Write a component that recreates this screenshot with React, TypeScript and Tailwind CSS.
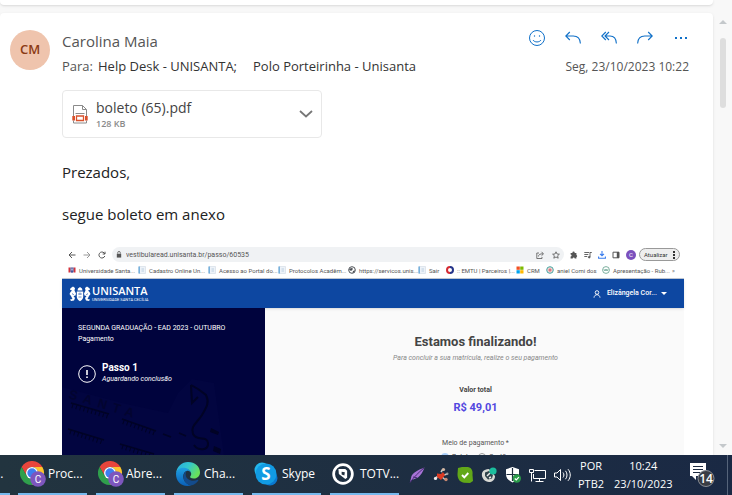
import type { ReactNode } from 'react';

type IconProps = { className?: string };

const stroke = { fill: 'none', stroke: 'currentColor', strokeWidth: 1.3 } as const;

/* ---------- mail icons ---------- */

function Smile() {
  return (
    <svg viewBox="0 0 16 16" className="size-4" {...stroke} strokeWidth={1}>
      <circle cx="8" cy="8" r="7.5" />
      <path d="M4 10c1.6 2.6 6.4 2.6 8 0" />
      <circle cx="5.5" cy="6" r=".7" fill="currentColor" stroke="none" />
      <circle cx="10.5" cy="6" r=".7" fill="currentColor" stroke="none" />
    </svg>
  );
}

function Reply() {
  return (
    <svg viewBox="0 0 16 16" className="size-4" {...stroke} strokeWidth={1.1}>
      <path d="M4.8 2 .8 6l4 4M.8 6h7.4c4.400 0 7 2.600 7.200 7.500" />
    </svg>
  );
}

function ReplyAll() {
  return (
    <svg viewBox="0 0 16 16" className="size-4" {...stroke} strokeWidth={1.1}>
      <path d="M4.800 2 .8 6l4 4M8 2 4 6l4 4M4 6h5c4 0 6.200 2.600 6.400 7.500" />
    </svg>
  );
}

function Forward() {
  return (
    <svg viewBox="0 0 16 16" className="size-4" {...stroke} strokeWidth={1.1}>
      <path d="m11.200 2 4 4-4 4M15.200 6H7.800C3.400 6 .8 8.600.6 13.500" />
    </svg>
  );
}

function Dots() {
  return (
    <svg viewBox="0 0 16 16" className="size-4" fill="currentColor">
      <path d="M2 7h2v2H2zM7 7h2v2H7zM12 7h2v2h-2z" />
    </svg>
  );
}

function PdfFile() {
  return (
    <svg viewBox="0 0 16 19" className="h-[19px] w-4 shrink-0" fill="none">
      <path d="M1.500 11V.5h9l4 4V11M1.500 15.500v2.500h13v-2.500M10.500.5v4h4M3.500 8.500h9" stroke="#8a8a8a" />
      <path d="M4.500 11h7v4.500h-7z" stroke="#d9512c" strokeWidth="1.300" />
      <path d="M.3 11h2.700v4.500H.3zM13 11h2.700v4.500H13z" fill="#d9512c" />
    </svg>
  );
}

function Chevron() {
  return (
    <svg viewBox="0 0 14 8" className="h-2 w-3.5" fill="none" stroke="#777" strokeWidth="1.800">
      <path d="m1 1 6 5.500L13 1" />
    </svg>
  );
}

/* ---------- embedded browser icons ---------- */

function ArrowGlyph({ className }: IconProps) {
  return (
    <svg viewBox="0 0 8 8" className={`size-2 ${className ?? ''}`} {...stroke} strokeWidth={1}>
      <path d="M4 1 1 4l3 3M1 4h6.500" />
    </svg>
  );
}

function Reload() {
  return (
    <svg viewBox="0 0 8 8" className="size-2" {...stroke} strokeWidth={1}>
      <path d="M6.800 5A3 3 0 1 1 6 1.800L7 3M7 .7V3H4.700" />
    </svg>
  );
}

function Lock() {
  return (
    <svg viewBox="0 0 6 8" className="h-[7px] w-1.5 text-[#555]" {...stroke} strokeWidth={0.900}>
      <path d="M1.500 3V2a1.500 1.500 0 0 1 3 0v1" />
      <path d="M.5 3.200h5V7.500h-5z" fill="currentColor" stroke="none" />
    </svg>
  );
}

function Share() {
  return (
    <svg viewBox="0 0 8 8" className="size-2" {...stroke} strokeWidth={0.800}>
      <path d="M3 2H.8v5.500H6V6M2.500 5.500C2.500 3.500 4 2.800 7 2.800M5.500.8l2 2-2 2" />
    </svg>
  );
}

function Star() {
  return (
    <svg viewBox="0 0 8 8" className="size-2" {...stroke} strokeWidth={0.800}>
      <path d="m4 .8 1 2.200 2.400.2-1.800 1.600.6 2.400L4 6 1.800 7.200l.6-2.400L.6 3.200 3 3z" />
    </svg>
  );
}

function Puzzle() {
  return (
    <svg viewBox="0 0 8 8" className="size-2" fill="currentColor">
      <path d="M.6 2H2.500a1.100 1.100 0 1 1 2.100 0h1.800v1.900a1.100 1.100 0 0 1 0 2.100v1.500H4.700a1 1 0 0 0-2 0H.6V5.500a1 1 0 0 0 0-2z" />
    </svg>
  );
}

function Playlist() {
  return (
    <svg viewBox="0 0 8 8" className="size-2" {...stroke} strokeWidth={0.900}>
      <path d="M.3 1.500h5M.3 3.500h4M.3 5.500h3M6 6V1.500h1.800" />
      <circle cx="5.200" cy="6.200" r=".8" fill="currentColor" />
    </svg>
  );
}

function Download() {
  return (
    <svg viewBox="0 0 8 8" className="size-2 text-[#3b7ded]" {...stroke} strokeWidth={1.100}>
      <path d="M4 0v4.500M2 2.800 4 4.800l2-2M.6 5.500v1.700h6.800V5.500" />
    </svg>
  );
}

function Panel() {
  return (
    <svg viewBox="0 0 8 8" className="size-2" {...stroke} strokeWidth={1}>
      <path d="M1 1.200h6v5.600H1z" />
      <path d="M4.800 1H7v6H4.800z" fill="currentColor" stroke="none" />
    </svg>
  );
}

function PageMark() {
  return (
    <svg viewBox="0 0 8 8" className="size-2 shrink-0">
      <path d="M1 .5h6.500v7H1z" fill="#edf2f8" stroke="#c8d3df" strokeWidth=".5" />
      <path d="M.5.5h1.300v7H.5z" fill="#5ba2d8" />
      <path d="M3.500 3h2.500M3.500 5h2.500" stroke="#9eb9d2" strokeWidth=".6" />
    </svg>
  );
}

function CrestMark() {
  return (
    <svg viewBox="0 0 8 8" className="size-2 shrink-0">
      <path d="M.5 1.500h2v5h-2zM5.500 1.500h2v5h-2z" fill="#d4323c" />
      <path d="M2.500 1.500h3v4.500L4 7 2.500 6z" fill="#46549c" />
      <path d="M3.500 2.500h1v2h-1z" fill="#fff" />
    </svg>
  );
}

function GlobeMark() {
  return (
    <svg viewBox="0 0 8 8" className="size-2 shrink-0">
      <circle cx="4" cy="4" r="3.300" fill="#fff" stroke="#4b4f55" />
      <path d="M1 3.500 3 2l2 .5L4 4.500l-1.500.3zM5 5l2-.7L6 6.500l-1.500.3z" fill="#4b4f55" />
    </svg>
  );
}

function EmtuMark() {
  return (
    <svg viewBox="0 0 8 8" className="size-2 shrink-0" fill="none" strokeWidth="2">
      <path d="M4 1a3 3 0 0 0 0 6" stroke="#d42a32" />
      <path d="M4 1a3 3 0 0 1 0 6" stroke="#25348a" />
    </svg>
  );
}

function WindowsMark() {
  return (
    <svg viewBox="0 0 8 8" className="size-2 shrink-0">
      <path d="M.5.5h3.300v3.300H.5z" fill="#f25022" />
      <path d="M4.200.5h3.300v3.300H4.200z" fill="#7fba00" />
      <path d="M.5 4.200h3.300v3.300H.5z" fill="#00a4ef" />
      <path d="M4.200 4.200h3.300v3.300H4.200z" fill="#ffb900" />
    </svg>
  );
}

function TargetMark() {
  return (
    <svg viewBox="0 0 8 8" className="size-2 shrink-0">
      <circle cx="4" cy="4" r="3.300" fill="#f3d2d2" stroke="#45aaa6" />
      <circle cx="4" cy="4" r="1.500" fill="#dc7880" />
    </svg>
  );
}

function WaveMark() {
  return (
    <svg viewBox="0 0 8 8" className="size-2 shrink-0" fill="none" stroke="#5c9c86" strokeWidth=".8">
      <circle cx="4" cy="4" r="3.400" />
      <path d="M2 3.200 3 5l1-2 1 2 1-1.800" />
    </svg>
  );
}

function UnisantaCrest() {
  return (
    <svg viewBox="0 0 22 16" className="h-4 w-[22px] shrink-0" fill="#fff">
      <path d="M4 .5 6 2 5.500 4.500l1.500 3-.5 2-2 .5 1.500 2L5 14.500l-3 .5-1-1.500 2.500-.5-1.500-3L.5 8l1-2L3 4.500l-2-.7.5-1.600z" />
      <path d="M18 .5 16 2l.5 2.500-1.500 3 .5 2 2 .5-1.500 2 1 2.500 3 .5 1-1.500-2.500-.5 1.500-3 1.500-2-1-2L19 4.500l2-.7-.5-1.600z" />
      <path d="M8.500 4.500 9 2.500l2-1.500 2 1.500.5 2zM7.800 5.500h6.400V11c0 2-1.700 3.200-3.200 4.200C9.500 14.200 7.800 13 7.800 11z" />
      <path d="M9 8h4M11 6.500V9M9.500 11h3" stroke="#4c77bb" strokeWidth=".8" />
      <path d="M3.500 7.500 4.500 9M18.500 7.500l-1 1.500" stroke="#0d47a1" strokeWidth=".8" />
    </svg>
  );
}

function Building() {
  return (
    <svg viewBox="0 0 203 76" preserveAspectRatio="xMinYMin slice" className="absolute top-[71px] left-0 h-[76px] w-full" aria-hidden="true">
      <path d="M0 8 60 24l46 10 10-20 14-14 22 4 10 72H0z" fill="#020540" />
      <text transform="translate(6 19) rotate(17)" letterSpacing="6" fill="#020430" fontFamily="Liberation Sans" fontWeight="bold" fontSize="13">SANTA</text>
      <g fill="none" stroke="#010325" strokeWidth="1.500">
        <path d="m9 24 38 11M60 40l34 12M6 50l36 11M58 65l34 10M101 55l8 3M117 54l7 3" />
        <path d="m10 27 37 11M61 43l33 12M8 53l34 11M60 68l32 10" strokeWidth="4" strokeDasharray="1 3" />
        <path d="M129 6l7 4 8 6c4 8 0 13-4 20-5 8-12 11-9 19 4 8 14 1 15 9 1 8-10 8-14 2M129 6l1 18 6-6" strokeWidth="2" />
      </g>
      <path d="m149 49 8 4-1 3-8-3zM152 67l7 3-1 5-7-3z" fill="#010325" />
    </svg>
  );
}

/* ---------- taskbar icons ---------- */

function Chrome() {
  return (
    <svg viewBox="0 0 26 26" className="size-[26px] shrink-0">
      <path d="M1.600 6A12 12 0 0 1 22.400 6H12A6 6 0 0 0 6.800 15z" fill="#e8453c" />
      <path d="M22.400 6A12 12 0 0 1 12 24l5.200-9A6 6 0 0 0 12 6z" fill="#fdc52c" />
      <path d="M12 24A12 12 0 0 1 1.600 6l5.200 9a6 6 0 0 0 10.400 0z" fill="#2f9f4c" />
      <circle cx="12" cy="12" r="6" fill="#fff" />
      <circle cx="12" cy="12" r="4.700" fill="#3c7ff0" />
      <circle cx="18" cy="18" r="7.800" fill="#7d56bd" />
      <text x="18" y="21.500" textAnchor="middle" fontSize="10" fontFamily="Roboto" fill="#fff">C</text>
    </svg>
  );
}

function Edge() {
  return (
    <svg viewBox="0 0 24 24" className="mr-0.5 size-6 shrink-0">
      <defs>
        <linearGradient id="edgeTop" x1="0" y1="0" x2="1" y2=".5">
          <stop offset="0" stopColor="#2aa9dd" />
          <stop offset=".5" stopColor="#32c6cf" />
          <stop offset="1" stopColor="#69e05a" />
        </linearGradient>
        <linearGradient id="edgeBody" x1="0" y1="0" x2="0" y2="1">
          <stop offset="0" stopColor="#1fa0e2" />
          <stop offset="1" stopColor="#0a5fb8" />
        </linearGradient>
      </defs>
      <path d="M.2 10.500C1 4.200 5.900 0 12 0c7 0 12 4.800 12 10.200 0 4-3 6.300-6.300 6.300-3 0-4-1.200-3.500-2 .8-1.200 1-1.800 1-2.700 0-2.500-3-5.300-7.200-5.300-3.300 0-6 1.500-7.800 4z" fill="url(#edgeTop)" />
      <path d="M0 12c0-3.500 3.200-6.200 7.500-6.200 3.500 0 7 2.200 7.600 5-1-1.500-2.500-2-4-2C8 9.500 6.500 13 7.500 16.500 8.500 20.500 12 23 15.500 23.300 6.500 26 0 20 0 12z" fill="url(#edgeBody)" />
      <path d="M11 9c-2.500 1-3.900 4-3.400 7.500.8 4 4.400 7 8.400 6.700 3-.8 5-2.700 6.300-4.700.4-.8-.2-1-.7-.7C15.500 20.500 10 17 9.700 13c-.1-1.700.4-3 1.300-4z" fill="#134b8c" />
    </svg>
  );
}

function Skype() {
  return (
    <svg viewBox="0 0 24 24" className="mr-0.5 size-6 shrink-0">
      <circle cx="8" cy="8" r="7.500" fill="#23b7ee" />
      <circle cx="16" cy="16" r="7.500" fill="#0a78cf" />
      <circle cx="12" cy="12" r="10.500" fill="#119be3" />
      <text x="12" y="18" textAnchor="middle" fontSize="17" fontWeight="bold" fontFamily="Open Sans" fill="#fff">S</text>
    </svg>
  );
}

function Totvs() {
  return (
    <svg viewBox="0 0 24 24" className="mr-1 size-[22px] shrink-0">
      <circle cx="12" cy="12" r="10.200" fill="none" stroke="#fff" strokeWidth="3" />
      <path d="M7 6.500h7.500l2 2V16l-2 1.500-7-5.500z" fill="#fff" />
      <path d="m10.500 9.500 3.500.5-.5 3.500-3-1z" fill="#22303f" />
    </svg>
  );
}

function Feather() {
  return (
    <svg viewBox="0 0 16 16" className="size-4">
      <path d="M1 15.500 2.500 9C5 5 9 3 15.500.5 14 5 12 8 9 10.500L3 13z" fill="#a773d6" />
      <path d="M1 15.500C5 10 9 6 15 1M4 10l4 .8" stroke="#4b2c78" strokeWidth="1" fill="none" />
    </svg>
  );
}

function Tools() {
  return (
    <svg viewBox="0 0 16 16" className="size-4">
      <path d="m1.500 11.500 4-2.500M8 5l2-3M10.500 8l4-1M9 10l3 2.500" stroke="#c9ccca" strokeWidth="1.600" />
      <path d="m4 6.500 4 .5 2-2 2 3-4 5-4-3z" fill="#dc3a22" />
      <circle cx="10.500" cy="2.500" r="1.600" fill="#d5b8a4" />
      <circle cx="13" cy="12.500" r="1.700" fill="#c98871" />
      <circle cx="2.500" cy="11.500" r="1.600" fill="#eee" />
      <circle cx="14.300" cy="6.800" r="1.200" fill="#999" />
    </svg>
  );
}

function GreenCheck() {
  return (
    <svg viewBox="0 0 16 16" className="size-4">
      <path d="M1 1 5 0h6c4 1 5 4 4.500 8L16 14l-3 2-6-.3C2 15 .5 11 .5 7z" fill="#62a818" />
      <path d="m5 8 2.300 2.300L11.300 6" stroke="#fff" strokeWidth="1.900" fill="none" />
    </svg>
  );
}

function Headset() {
  return (
    <svg viewBox="0 0 16 16" className="size-4">
      <path d="M1 6c1-3 4-4 7-4l6 7c0 4-3 6-6 6-4 0-8-4-7-9z" fill="#d8d9d5" />
      <path d="M4 5.500 8 4l4 4-1 3.500-4 1L4 9z" fill="#30434b" />
      <path d="m6 9 3-3M8 11l2-1" stroke="#e9e9e9" strokeWidth="1.500" fill="none" />
      <circle cx="12" cy="4" r="3.600" fill="#1bbd9d" />
    </svg>
  );
}

function Shield() {
  return (
    <svg viewBox="0 0 16 16" className="size-4">
      <path d="M7.500 0 14 2.300V7.500c0 4-3 6-6.500 8C4 13.500 1 11.500 1 7.500V2.300z" fill="#fff" />
      <path d="M7.500 1v13M1.500 7.500h12" stroke="#1d2c3e" strokeWidth="1.200" />
      <circle cx="11.800" cy="11.500" r="4.200" fill="#2b9b4a" />
      <path d="m9.800 11.500 1.500 1.500 2.600-2.800" stroke="#fff" strokeWidth="1.200" fill="none" />
    </svg>
  );
}

function Network() {
  return (
    <svg viewBox="0 0 17 15" className="h-[15px] w-[17px]" fill="none" stroke="#fff">
      <path d="M5.500 2.500h11v8H4.500V6M10.500 10.500v3M6.500 13.500h8M.5 1.500h4v3h-4zM2.500 4.500v9" />
    </svg>
  );
}

function Speaker() {
  return (
    <svg viewBox="0 0 18 14" className="h-3.5 w-[18px]" fill="none" stroke="#fff">
      <path d="M.5 5v4h2.500l3.500 3.500v-11L3 5zM9 4.500c1.200 1.500 1.200 3.500 0 5M11.500 2.800c2 2.500 2 6 0 8.400M14 1.200c3 3.500 3 8.100 0 11.600" />
    </svg>
  );
}

function Notification() {
  return (
    <svg viewBox="0 0 25 24" className="h-6 w-[25px]">
      <path d="M0 0h16v13H6v4l-4-4H0z" fill="#fff" />
      <path d="M3 3.500h10M3 6.500h10M3 9.500h7" stroke="#1c2b42" />
      <circle cx="16" cy="15.500" r="8" fill="#3a3d44" stroke="#8b8f96" />
      <text x="16" y="20" textAnchor="middle" fontSize="12" fontWeight="600" fontFamily="Open Sans" fill="#fff">14</text>
    </svg>
  );
}

/* ---------- data ---------- */

const mailActions: { label: string; icon: ReactNode }[] = [
  { label: 'Reagir', icon: <Smile /> },
  { label: 'Responder', icon: <Reply /> },
  { label: 'Responder a todos', icon: <ReplyAll /> },
  { label: 'Encaminhar', icon: <Forward /> },
  { label: 'Mais ações', icon: <Dots /> },
];

const bookmarks: { label: string; icon: ReactNode; width: string }[] = [
  { label: 'Universidade Santa...', icon: <CrestMark />, width: 'w-13' },
  { label: 'Cadastro Online Un...', icon: <PageMark />, width: 'w-13' },
  { label: 'Acesso ao Portal do...', icon: <PageMark />, width: 'w-13' },
  { label: 'Protocolos Acadêm...', icon: <PageMark />, width: 'w-13' },
  { label: 'https://servicos.unis...', icon: <GlobeMark />, width: 'w-13' },
  { label: 'Sair', icon: <PageMark />, width: 'w-2.5' },
  { label: ':: EMTU | Parceiros |...', icon: <EmtuMark />, width: 'w-13' },
  { label: 'CRM', icon: <WindowsMark />, width: 'w-3' },
  { label: 'aniel Comi dos', icon: <TargetMark />, width: 'w-[38px]' },
  { label: 'Apresentação - Rub...', icon: <WaveMark />, width: 'w-13' },
];

const windows: { label: string; icon: ReactNode }[] = [
  { label: 'Proc...', icon: <Chrome /> },
  { label: 'Abre...', icon: <Chrome /> },
  { label: 'Cha...', icon: <Edge /> },
  { label: 'Skype', icon: <Skype /> },
  { label: 'TOTV...', icon: <Totvs /> },
];

/* ---------- sections ---------- */

function MessageHeader() {
  return (
    <header className="flex gap-3">
      <div className="mt-[5px] flex size-10 shrink-0 items-center justify-center rounded-full bg-[#efc4ad] text-[13px] font-semibold text-[#8a3a14]">
        CM
      </div>
      <div className="min-w-0 flex-1">
        <div className="flex h-[30px] items-end justify-between">
          <h1 className="text-[15px] leading-7 text-[#555]">Carolina Maia</h1>
          <div className="mb-[9px] flex gap-5 text-[#1070c8]">
            {mailActions.map((a) => (
              <button key={a.label} aria-label={a.label} className="flex size-4 items-center justify-center">
                {a.icon}
              </button>
            ))}
          </div>
        </div>
        <div className="flex h-6 items-center justify-between text-[13px] text-[#333]">
          <p className="flex">
            <span className="mr-[5px] text-[#555]">Para:</span>
            <span className="mr-4">Help Desk - UNISANTA;</span>
            <span>Polo Porteirinha - Unisanta</span>
          </p>
          <time className="text-[12px] text-[#555]">Seg, 23/10/2023 10:22</time>
        </div>
      </div>
    </header>
  );
}

function Attachment() {
  return (
    <button className="mt-[11px] flex h-12 w-[260px] items-center rounded border border-[#e8e8e8] pr-2 pl-[9px] text-left">
      <PdfFile />
      <span className="ml-2 flex-1 pt-1">
        <span className="block text-[14px] leading-4 text-[#444]">boleto (65).pdf</span>
        <span className="block text-[9px] leading-4 font-semibold text-[#8a8a8a]">128 KB</span>
      </span>
      <Chevron />
    </button>
  );
}

function BrowserBars() {
  return (
    <div className="font-['Roboto',sans-serif]">
      <div className="flex h-[15px] items-center pr-1 pl-1.5 text-[#555]">
        <div className="flex gap-[7px]">
          <button aria-label="Voltar"><ArrowGlyph /></button>
          <button aria-label="Avançar"><ArrowGlyph className="rotate-180 text-[#999]" /></button>
          <button aria-label="Recarregar"><Reload /></button>
        </div>
        <div className="ml-1.5 flex h-[15px] flex-1 items-center gap-1 rounded-full bg-[#f0f2f4] px-1">
          <Lock />
          <input
            aria-label="Endereço"
            readOnly
            defaultValue="vestibularead.unisanta.br/passo/60535"
            className="min-w-0 flex-1 bg-transparent text-[7px] leading-3 text-[#555] outline-none"
          />
          <button aria-label="Compartilhar" className="mr-1"><Share /></button>
          <button aria-label="Favoritar"><Star /></button>
        </div>
        <div className="ml-1.5 flex items-center gap-1.5">
          <Puzzle />
          <Playlist />
          <Download />
          <Panel />
          <span className="flex size-2.5 items-center justify-center rounded-full bg-[#7b50bd] text-[6px] text-white">C</span>
        </div>
        <button className="ml-[3px] flex h-[13px] w-[41px] shrink-0 items-center justify-between rounded-full border border-[#999] bg-[#eee] px-1 text-[6px] leading-3 text-[#333]">
          Atualizar
          <svg viewBox="0 0 2 8" className="h-2 w-0.5" fill="#333">
            <path d="M0 0h2v2H0zM0 3h2v2H0zM0 6h2v2H0z" />
          </svg>
        </button>
      </div>
      <nav className="flex h-[17px] items-center gap-[7px] border-b border-[#bfc8d4] pl-1.5 text-[6px] text-[#555]">
        {bookmarks.map((b) => (
          <a key={b.label} href="#" className="flex shrink-0 items-center gap-[3px]">
            {b.icon}
            <span className={`whitespace-nowrap ${b.width}`}>{b.label}</span>
          </a>
        ))}
        <span>»</span>
      </nav>
    </div>
  );
}

function BrandBar() {
  return (
    <div className="relative flex h-[29px] items-center justify-between bg-[#0d47a1] pr-[17px] pl-[7px] font-['Roboto',sans-serif] text-white shadow-sm">
      <div className="flex items-center gap-px">
        <UnisantaCrest />
        <div>
          <div className="font-['Open_Sans',sans-serif] text-[11px] leading-[12px] font-semibold">UNISANTA</div>
          <div className="text-[4px] leading-[5px] whitespace-nowrap">UNIVERSIDADE SANTA CECÍLIA</div>
        </div>
      </div>
      <button className="flex items-center gap-1 text-[7px] font-medium">
        <svg viewBox="0 0 8 8" className="mr-0.5 size-2" {...stroke} strokeWidth={0.900}>
          <circle cx="4" cy="2.500" r="1.800" />
          <path d="M1 7.700c.3-4 5.700-4 6 0" />
        </svg>
        <span>Elizângela Cor...</span>
        <svg viewBox="0 0 6 3" className="h-[3px] w-1.5" fill="#fff">
          <path d="M0 0h6L3 3z" />
        </svg>
      </button>
    </div>
  );
}

function StepPanel() {
  return (
    <aside className="relative w-[203px] shrink-0 overflow-hidden bg-[#00033d] px-4 pt-[15px] font-['Roboto',sans-serif] text-white">
      <Building />
      <p className="relative text-[7px] leading-[11px] whitespace-nowrap">SEGUNDA GRADUAÇÃO - EAD 2023 - OUTUBRO</p>
      <p className="relative text-[7px] leading-[11px]">Pagamento</p>
      <div className="relative mt-[17px] flex items-center gap-1.5">
        <svg viewBox="0 0 18 18" className="size-[18px]" fill="none" stroke="#fff">
          <circle cx="9" cy="9" r="8.300" />
          <path d="M9 5v5M9 11.500v1.500" strokeWidth="1.600" />
        </svg>
        <div>
          <p className="text-[10px] leading-3 font-bold">Passo 1</p>
          <p className="text-[7px] leading-[11px] italic">Aguardando conclusão</p>
        </div>
      </div>
    </aside>
  );
}

function Payment() {
  return (
    <section className="flex flex-1 flex-col items-center bg-[#fafafa] pt-[26px] pl-0.5 font-['Roboto',sans-serif] text-[#444]">
      <h2 className="text-[13px] leading-4 font-bold">Estamos finalizando!</h2>
      <p className="mt-0.5 text-[7px] leading-3 text-[#888] italic">
        Para concluir a sua matrícula, realize o seu pagamento
      </p>
      <p className="mt-5 text-[7px] leading-3 font-bold">Valor total</p>
      <p className="mt-1 text-[11px] leading-4 font-bold text-[#5247e0]">R$ 49,01</p>
      <fieldset className="mt-[21px] flex flex-col items-center text-[7px]">
        <legend className="mx-auto leading-3 text-[#555]">Meio de pagamento *</legend>
        <div className="mt-0.5 flex gap-1.5 leading-3">
          <label className="flex items-center gap-[3px]">
            <input type="radio" name="meio" defaultChecked className="size-2 appearance-none rounded-full border-2 border-[#a8cdf8] bg-[#2485ee]" />
            Boleto
          </label>
          <label className="flex items-center gap-[3px]">
            <input type="radio" name="meio" className="size-2 appearance-none rounded-full border border-[#999]" />
            Cartão
          </label>
        </div>
      </fieldset>
    </section>
  );
}

function Taskbar() {
  return (
    <footer className="flex h-10 shrink-0 bg-linear-to-r from-[#22343f] to-[#1a2944] text-[12px] text-white">
      <button className="mr-2 flex w-2.5 items-center overflow-hidden border-b-2 border-[#76b9ed]">
        <span className="-ml-1.5">...</span>
      </button>
      <div className="flex gap-[9px]">
        {windows.map((w, i) => (
          <button key={i} className="flex w-[69px] items-center gap-0.5 border-b-2 border-[#76b9ed] pl-0.5 whitespace-nowrap">
            {w.icon}
            <span>{w.label}</span>
          </button>
        ))}
      </div>
      <div className="ml-2.5 flex items-center gap-2">
        <Feather />
        <Tools />
        <GreenCheck />
        <Headset />
        <Shield />
        <Network />
        <Speaker />
      </div>
      <div className="ml-1.5 flex flex-1 items-center text-center text-[11px] leading-[18px]">
        <div>POR<br />PTB2</div>
        <time className="ml-2.5">10:24<br />23/10/2023</time>
        <button aria-label="Notificações" className="mr-3 ml-auto flex"><Notification /></button>
      </div>
      <div className="mr-1 w-px bg-[#56647a]" />
    </footer>
  );
}

export default function App() {
  return (
    <div className="flex h-screen flex-col overflow-hidden bg-[#f8f8f8] font-['Open_Sans',sans-serif]">
      <div className="flex min-h-0 flex-1">
        <div className="flex min-w-0 flex-1 flex-col gap-2">
          <div className="h-[5px] shrink-0 rounded-b bg-white shadow" />
          <main className="min-h-0 flex-1 overflow-hidden rounded-t bg-white pt-3 pr-6 pl-2.5 shadow">
            <MessageHeader />
            <div className="pl-13">
              <Attachment />
              <div className="mt-6 space-y-[22px] text-[15px] leading-5 text-[#222]">
                <p>Prezados,</p>
                <p>segue boleto em anexo</p>
              </div>
              <div className="mt-[23px] mr-[5px]">
                <BrowserBars />
                <BrandBar />
                <div className="flex h-80">
                  <StepPanel />
                  <Payment />
                </div>
              </div>
            </div>
          </main>
        </div>
        <div className="flex w-[19px] flex-col items-center pt-5 pb-[7px]">
          <svg viewBox="0 0 8 4" className="h-1 w-2" fill="#c4c8cb"><path d="M0 4h8L4 0z" /></svg>
          <div className="mt-3.5 h-[70px] w-1.5 rounded-full bg-[#dedede]" />
          <svg viewBox="0 0 8 4" className="mt-auto h-1 w-2" fill="#c4c8cb"><path d="M0 0h8L4 4z" /></svg>
        </div>
      </div>
      <Taskbar />
    </div>
  );
}
